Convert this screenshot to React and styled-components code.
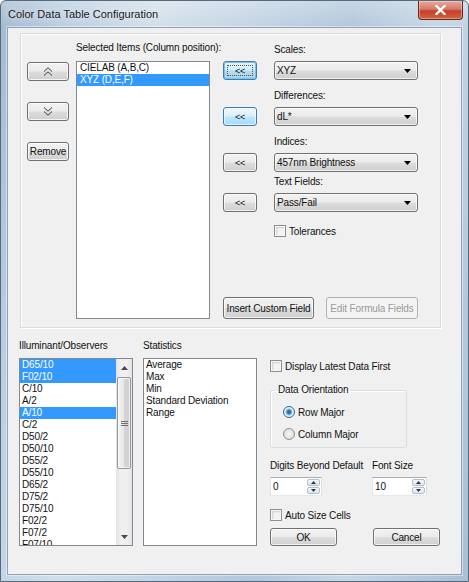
import React from 'react'
import styled, { createGlobalStyle, css } from 'styled-components'

const GlobalStyle = createGlobalStyle`
  html, body {
    margin: 0;
    padding: 0;
    background: #ffffff;
  }
  body {
    font-family: "Liberation Sans", Arial, sans-serif;
    font-size: 10px;
    letter-spacing: -0.15px;
    color: #111;
  }
  * {
    box-sizing: border-box;
  }
`

// window chrome
const Window = styled.div`
  width: 469px;
  height: 582px;
  display: flex;
  flex-direction: column;
  border: 1px solid #55697f;
  border-radius: 6px 6px 0 0;
  overflow: hidden;
  background:
    linear-gradient(180deg, rgba(255, 255, 255, 0.28) 0px, rgba(255, 255, 255, 0) 26px),
    linear-gradient(100deg, #a3b9cf 0%, #bccfe1 12%, #d2dfea 28%, #c3d4e4 45%, #b2c7db 62%, #c8d7e5 78%, #a9bfd5 100%);
`

const TitleBar = styled.div`
  height: 26px;
  flex: none;
  display: flex;
  align-items: flex-start;
  justify-content: space-between;
  padding-left: 7px;
`

const Title = styled.div`
  margin-top: 7px;
  font-size: 11px;
  line-height: 13px;
  letter-spacing: 0;
  color: #1b1b1b;
  text-shadow: 0 0 6px rgba(255, 255, 255, 0.9);
`

const CloseButton = styled.div`
  width: 45px;
  height: 19px;
  margin-right: 5px;
  border: 1px solid #6b2419;
  border-top: none;
  border-radius: 0 0 4px 4px;
  background: linear-gradient(180deg, #e9a99c 0%, #d9786a 45%, #c4412b 55%, #d4633e 100%);
  box-shadow: inset 0 0 0 1px rgba(255, 255, 255, 0.35);
  display: flex;
  align-items: center;
  justify-content: center;
`

const Client = styled.div`
  flex: 1;
  margin: 0 6px 6px 6px;
  border: 1px solid #8fa3b8;
  box-shadow: 0 0 0 1px rgba(255, 255, 255, 0.45);
  background: #f0f0f0;
  display: flex;
  flex-direction: column;
`

// top panel
const Panel = styled.div`
  margin: 5px 0 0 12px;
  width: 421px;
  height: 295px;
  border: 1px solid #dadada;
  box-shadow: inset 1px 1px 0 #ffffff, 1px 1px 0 #ffffff;
  display: flex;
  padding: 8px 22px 8px 6px;
`

const ButtonColumn = styled.div`
  width: 42px;
  padding-top: 20px;
  display: flex;
  flex-direction: column;
  gap: 21px;
`

const ListColumn = styled.div`
  width: ${p => p.$w}px;
  margin-left: ${p => p.$ml || 0}px;
  display: flex;
  flex-direction: column;
`

const Label = styled.div`
  height: 12px;
  line-height: 12px;
  white-space: nowrap;
  margin-bottom: ${p => p.$mb || 0}px;
`

const ListBox = styled.div`
  height: ${p => (p.$h ? `${p.$h}px` : 'auto')};
  flex: ${p => (p.$h ? 'none' : 1)};
  background: #ffffff;
  border: 1px solid #828790;
  display: flex;
  overflow: hidden;
`

const ListItems = styled.div`
  flex: 1;
  min-width: 0;
`

const ListItem = styled.div`
  height: 12px;
  line-height: 12px;
  padding-left: ${p => p.$indent}px;
  white-space: nowrap;
  background: ${p => (p.$selected ? '#3399ff' : 'transparent')};
  color: ${p => (p.$selected ? '#ffffff' : '#111111')};
`

const RightArea = styled.div`
  width: 195px;
  margin-left: 13px;
  display: flex;
  flex-direction: column;
`

const FieldRow = styled.div`
  display: grid;
  grid-template-columns: 34px 144px;
  grid-template-rows: 12px 19px;
  column-gap: 17px;
  row-gap: 5px;
  margin-top: ${p => p.$mt}px;
`

const FieldLabel = styled(Label)`
  grid-column: 2;
`

// buttons
const buttonVariants = {
  normal: css`
    border: 1px solid #707070;
    background: linear-gradient(180deg, #f2f2f2 0%, #ebebeb 48%, #dddddd 52%, #cfcfcf 100%);
    box-shadow: inset 0 0 0 1px rgba(255, 255, 255, 0.75);
    color: #111;
  `,
  hot: css`
    border: 1px solid #3c7fb1;
    background: linear-gradient(180deg, #eaf6fd 0%, #d9f0fc 48%, #bee6fd 52%, #a7d9f5 100%);
    box-shadow: inset 0 0 0 1px rgba(255, 255, 255, 0.7);
    color: #111;
  `,
  focus: css`
    border: 1px solid #3c7fb1;
    background: linear-gradient(180deg, #e5f4fc 0%, #d4edfa 48%, #b5dcf3 52%, #a3d2ee 100%);
    box-shadow: inset 0 0 0 1px #7ec1e7;
    color: #111;
    &::after {
      content: '';
      position: absolute;
      inset: 3px;
      border: 1px dotted #555;
    }
  `,
  disabled: css`
    border: 1px solid #adb2b5;
    background: #f4f4f4;
    color: #9a9a9a;
  `,
}

const Button = styled.div`
  position: relative;
  width: ${p => p.$w}px;
  height: ${p => p.$h}px;
  flex: none;
  border-radius: 3px;
  display: flex;
  align-items: center;
  justify-content: center;
  white-space: nowrap;
  font-size: ${p => p.$fs || 10}px;
  ${p => buttonVariants[p.$variant || 'normal']}
`

const Combo = styled.div`
  height: 19px;
  border: 1px solid #707070;
  border-radius: 3px;
  background: linear-gradient(180deg, #f2f2f2 0%, #ebebeb 48%, #dddddd 52%, #cfcfcf 100%);
  box-shadow: inset 0 0 0 1px rgba(255, 255, 255, 0.7);
  display: flex;
  align-items: center;
  justify-content: space-between;
  padding: 0 6px 0 2px;
  white-space: nowrap;
`

const CheckRow = styled.div`
  display: flex;
  align-items: center;
  gap: ${p => p.$gap || 3}px;
  height: 12px;
  margin-top: ${p => p.$mt || 0}px;
  margin-left: ${p => p.$ml || 0}px;
  white-space: nowrap;
`

const CheckBox = styled.span`
  width: 12px;
  height: 12px;
  flex: none;
  border: 1px solid #8e8f8f;
  background: #f4f4f4;
  box-shadow: inset 0 0 0 1px #f7f7f7, inset 1px 1px 2px 1px #cfcfcf;
`

const Radio = styled.span`
  width: 12px;
  height: 12px;
  flex: none;
  border-radius: 50%;
  border: 1px solid ${p => (p.$checked ? '#2c628b' : '#929292')};
  background: ${p =>
    p.$checked
      ? 'radial-gradient(circle, #1b4f7c 0, #3d8ac0 2px, #86c3ea 3px, #e8f3fa 4px, #f4f4f4 5px)'
      : 'radial-gradient(circle, #f8f8f8 0, #e4e4e4 4px, #d0d0d0 6px)'};
`

const BottomButtons = styled.div`
  margin-top: auto;
  display: flex;
  gap: 12px;
`

// bottom section
const Bottom = styled.div`
  display: flex;
  margin: 12px 0 0 11px;
`

const SideColumn = styled.div`
  margin-left: 13px;
  padding-top: 20px;
  display: flex;
  flex-direction: column;
  width: 172px;
`

const Group = styled.fieldset`
  margin: 12px 0 0 0;
  width: 137px;
  border: 1px solid #d5dfe5;
  border-radius: 3px;
  padding: 10px 0 7px 12px;
  display: flex;
  flex-direction: column;
  gap: 10px;
  box-shadow: inset 1px 1px 0 #ffffff;
`

const Legend = styled.legend`
  padding: 0 2px;
  margin-left: -7px;
  line-height: 12px;
  font-size: 10px;
`

const SettingsGrid = styled.div`
  display: grid;
  grid-template-columns: 102px 1fr;
  grid-template-rows: 12px 19px;
  row-gap: 5px;
  margin-top: ${p => p.$mt || 0}px;
`

const Spin = styled.div`
  width: ${p => p.$w}px;
  height: 19px;
  display: flex;
  background: #ffffff;
  border: 1px solid #abadb3;
  border-color: #abadb3 #dbdfe6 #e3e9ef #e2e3ea;
`

const SpinValue = styled.div`
  flex: 1;
  line-height: 17px;
  padding-left: 2px;
`

const SpinButtons = styled.div`
  width: 14px;
  display: flex;
  flex-direction: column;
  gap: 1px;
  padding: 1px 1px 1px 0;
`

const SpinButton = styled.div`
  flex: 1;
  border: 1px solid #b3bfcd;
  border-radius: 2px;
  background: linear-gradient(180deg, #f6f8fa, #dfe5ec);
  display: flex;
  align-items: center;
  justify-content: center;
`

const ButtonsGrid = styled.div`
  display: grid;
  grid-template-columns: 103px 1fr;
  margin-top: 7px;
`

// scrollbar
const ScrollBar = styled.div`
  width: 16px;
  flex: none;
  background: linear-gradient(90deg, #e3e3e3, #f0f0f0 30%, #f0f0f0 70%, #e3e3e3);
  display: flex;
  flex-direction: column;
`

const ScrollArrow = styled.div`
  height: 17px;
  display: flex;
  align-items: center;
  justify-content: center;
`

const ScrollTrack = styled.div`
  flex: 1;
  padding: 1px 1px 0 1px;
`

const Thumb = styled.div`
  height: 92px;
  border: 1px solid #979797;
  border-radius: 2px;
  background: linear-gradient(90deg, #f3f3f3, #e6e6e6 50%, #d6d6d6 50%, #cfcfcf);
  box-shadow: inset 0 0 0 1px rgba(255, 255, 255, 0.7);
  display: flex;
  align-items: center;
  justify-content: center;
`

const Tri = ({ dir = 'down', color = '#000', w = 7, h = 4 }) => (
  <svg width={w} height={h} viewBox={`0 0 ${w} ${h}`}>
    {dir === 'down' ? (
      <polygon points={`0,0 ${w},0 ${w / 2},${h}`} fill={color} />
    ) : (
      <polygon points={`0,${h} ${w},${h} ${w / 2},0`} fill={color} />
    )}
  </svg>
)

const DoubleChevron = ({ up }) => (
  <svg width="10" height="9" viewBox="0 0 10 9">
    <g fill="none" stroke="#3a3a3a" strokeWidth="1">
      {up ? (
        <>
          <polyline points="1,4.5 5,0.8 9,4.5" />
          <polyline points="1,8.5 5,4.8 9,8.5" />
        </>
      ) : (
        <>
          <polyline points="1,0.5 5,4.2 9,0.5" />
          <polyline points="1,4.5 5,8.2 9,4.5" />
        </>
      )}
    </g>
  </svg>
)

const Grip = () => (
  <svg width="7" height="7" viewBox="0 0 7 7">
    <g stroke="#6f6f6f" strokeWidth="1">
      <line x1="0" y1="1.5" x2="7" y2="1.5" />
      <line x1="0" y1="3.5" x2="7" y2="3.5" />
      <line x1="0" y1="5.5" x2="7" y2="5.5" />
    </g>
  </svg>
)

const illuminants = [
  ['D65/10', true], ['F02/10', true], ['C/10'], ['A/2'], ['A/10', true], ['C/2'],
  ['D50/2'], ['D50/10'], ['D55/2'], ['D55/10'], ['D65/2'], ['D75/2'],
  ['D75/10'], ['F02/2'], ['F07/2'], ['F07/10'],
]

const statistics = ['Average', 'Max', 'Min', 'Standard Deviation', 'Range']

const fields = [
  { label: 'Scales:', value: 'XYZ', variant: 'focus', mt: 2 },
  { label: 'Differences:', value: 'dL*', variant: 'hot', mt: 10 },
  { label: 'Indices:', value: '457nm Brightness', variant: 'normal', mt: 10 },
  { label: 'Text Fields:', value: 'Pass/Fail', variant: 'normal', mt: 4 },
]

const SpinBox = ({ value, w }) => (
  <Spin $w={w}>
    <SpinValue>{value}</SpinValue>
    <SpinButtons>
      <SpinButton><Tri dir="up" w={5} h={3} color="#243850" /></SpinButton>
      <SpinButton><Tri dir="down" w={5} h={3} color="#243850" /></SpinButton>
    </SpinButtons>
  </Spin>
)

const App = () => {
  return (
    <>
      <GlobalStyle />
      <Window>
        <TitleBar>
          <Title>Color Data Table Configuration</Title>
          <CloseButton>
            <svg width="11" height="10" viewBox="0 0 11 10">
              <path d="M1.5 1 L9.5 9 M9.5 1 L1.5 9" stroke="#ffffff" strokeWidth="2.4" strokeLinecap="square" />
            </svg>
          </CloseButton>
        </TitleBar>

        <Client>
          <Panel>
            <ButtonColumn>
              <Button $w={42} $h={19}><DoubleChevron up /></Button>
              <Button $w={42} $h={19}><DoubleChevron /></Button>
              <Button $w={42} $h={19}>Remove</Button>
            </ButtonColumn>

            <ListColumn $w={134} $ml={7}>
              <Label $mb={7}>Selected Items (Column position):</Label>
              <ListBox>
                <ListItems>
                  <ListItem $indent={3}>CIELAB (A,B,C)</ListItem>
                  <ListItem $indent={3} $selected>XYZ (D,E,F)</ListItem>
                </ListItems>
              </ListBox>
            </ListColumn>

            <RightArea>
              {fields.map(f => (
                <FieldRow key={f.label} $mt={f.mt}>
                  <FieldLabel>{f.label}</FieldLabel>
                  <Button $w={34} $h={19} $fs={9} $variant={f.variant}>&lt;&lt;</Button>
                  <Combo>
                    <span>{f.value}</span>
                    <Tri />
                  </Combo>
                </FieldRow>
              ))}
              <CheckRow $mt={13} $ml={51}>
                <CheckBox />
                <span>Tolerances</span>
              </CheckRow>
              <BottomButtons>
                <Button $w={91} $h={22}>Insert Custom Field</Button>
                <Button $w={92} $h={22} $variant="disabled">Edit Formula Fields</Button>
              </BottomButtons>
            </RightArea>
          </Panel>

          <Bottom>
            <ListColumn $w={114}>
              <Label $mb={6}>Illuminant/Observers</Label>
              <ListBox $h={188}>
                <ListItems>
                  {illuminants.map(([name, sel]) => (
                    <ListItem key={name} $indent={2} $selected={sel}>{name}</ListItem>
                  ))}
                </ListItems>
                <ScrollBar>
                  <ScrollArrow><Tri dir="up" w={7} h={4} color="#4a4a4a" /></ScrollArrow>
                  <ScrollTrack>
                    <Thumb><Grip /></Thumb>
                  </ScrollTrack>
                  <ScrollArrow><Tri dir="down" w={7} h={4} color="#4a4a4a" /></ScrollArrow>
                </ScrollBar>
              </ListBox>
            </ListColumn>

            <ListColumn $w={114} $ml={10}>
              <Label $mb={6}>Statistics</Label>
              <ListBox $h={188}>
                <ListItems>
                  {statistics.map(s => (
                    <ListItem key={s} $indent={2}>{s}</ListItem>
                  ))}
                </ListItems>
              </ListBox>
            </ListColumn>

            <SideColumn>
              <CheckRow>
                <CheckBox />
                <span>Display Latest Data First</span>
              </CheckRow>

              <Group>
                <Legend>Data Orientation</Legend>
                <CheckRow $gap={3}>
                  <Radio $checked />
                  <span>Row Major</span>
                </CheckRow>
                <CheckRow $gap={3}>
                  <Radio />
                  <span>Column Major</span>
                </CheckRow>
              </Group>

              <SettingsGrid $mt={12}>
                <Label>Digits Beyond Default</Label>
                <Label>Font Size</Label>
                <SpinBox value="0" w={52} />
                <SpinBox value="10" w={55} />
              </SettingsGrid>

              <CheckRow $mt={13}>
                <CheckBox />
                <span>Auto Size Cells</span>
              </CheckRow>

              <ButtonsGrid>
                <Button $w={67} $h={18}>OK</Button>
                <Button $w={67} $h={18}>Cancel</Button>
              </ButtonsGrid>
            </SideColumn>
          </Bottom>
        </Client>
      </Window>
    </>
  )
}

export default App
